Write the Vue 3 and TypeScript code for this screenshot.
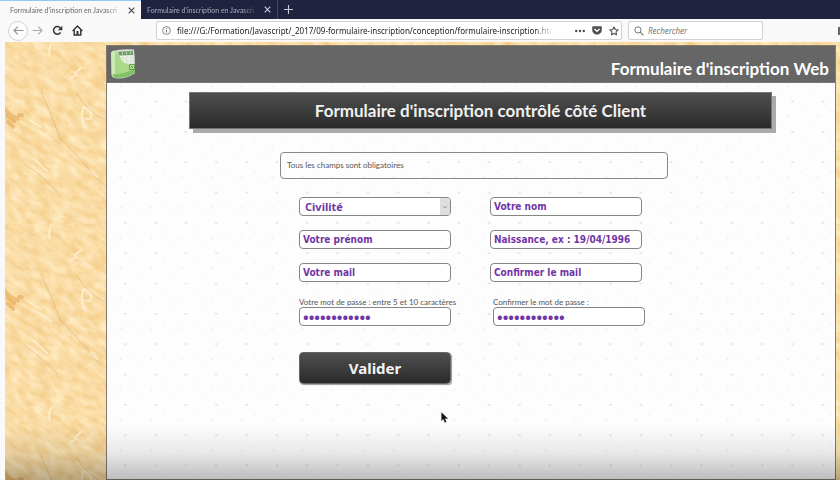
<script setup lang="ts">
import { ref } from 'vue'

const url = 'file:///G:/Formation/Javascript/_2017/09-formulaire-inscription/conception/formulaire-inscription.htm'
const tabs = [
  { title: "Formulaire d'inscription en Javascri", active: true },
  { title: "Formulaire d'inscription en Javascri", active: false },
]
const fields = [
  { id: 'nom', text: 'Votre nom' },
  { id: 'prenom', text: 'Votre prénom' },
  { id: 'naissance', text: 'Naissance, ex : 19/04/1996' },
  { id: 'mail', text: 'Votre mail' },
  { id: 'mail2', text: 'Confirmer le mail' },
]
const values = ref<Record<string, string>>({})
const password = ref('motdepasse12')
const confirmation = ref('motdepasse12')
const search = ref('')
</script>

<template>
  <div class="browser">
    <nav class="tabs">
      <div v-for="(tab, i) in tabs" :key="i" class="tab" :class="{ active: tab.active }">
        <span class="tab-title">{{ tab.title }}</span>
        <button class="icon-btn" aria-label="Fermer">
          <svg width="7" height="7" viewBox="0 0 7 7"><path d="M.7.7l5.6 5.6M6.3.7L.7 6.3" fill="none" stroke="currentColor" stroke-width="1.1" /></svg>
        </button>
      </div>
      <button class="icon-btn plus" aria-label="Nouvel onglet">
        <svg width="9" height="9" viewBox="0 0 9 9"><path d="M4.5 0v9M0 4.5h9" fill="none" stroke="currentColor" stroke-width="1.1" /></svg>
      </button>
    </nav>

    <div class="toolbar">
      <div class="nav-buttons">
        <button class="icon-btn back" aria-label="Précédent">
          <svg width="11" height="9" viewBox="0 0 11 9"><path d="M10.5 4.5H1M4.8.7L1 4.5l3.8 3.8" fill="none" stroke="#929292" stroke-width="1.1" /></svg>
        </button>
        <button class="icon-btn forward" aria-label="Suivant">
          <svg width="11" height="9" viewBox="0 0 11 9"><path d="M.5 4.5H10M6.2.7L10 4.5 6.2 8.3" fill="none" stroke="#aaa" stroke-width="1.1" /></svg>
        </button>
        <button class="icon-btn" aria-label="Actualiser">
          <svg width="11" height="11" viewBox="0 0 11 11"><path d="M8.6 7.4A3.8 3.8 0 1 1 8.3 3" fill="none" stroke="#333" stroke-width="1.5" /><path d="M10.3.7v4.5H5.8z" fill="#333" /></svg>
        </button>
        <button class="icon-btn" aria-label="Accueil">
          <svg width="11" height="11" viewBox="0 0 11 11"><path d="M.7 5.9L5.5 1l4.8 4.9M2.2 5v5h6.6V5" fill="none" stroke="#333" stroke-width="1.4" /><path d="M4.5 6h2v4h-2z" fill="#333" /></svg>
        </button>
      </div>
      <div class="url-bar">
        <svg width="9" height="9" viewBox="0 0 9 9"><circle cx="4.5" cy="4.5" r="3.9" fill="none" stroke="#777" stroke-width=".9" /><path d="M4.5 4v2.6M4.5 2.2v1" stroke="#777" stroke-width="1" /></svg>
        <span class="url">{{ url }}</span>
        <svg width="10" height="4" viewBox="0 0 10 4"><g fill="#4a4a4a"><circle cx="1.2" cy="2" r="1.2" /><circle cx="5" cy="2" r="1.2" /><circle cx="8.8" cy="2" r="1.2" /></g></svg>
        <svg width="10" height="9" viewBox="0 0 10 9"><path d="M1 .3h8q.8 0 .8.8v2.8a4.8 4.8 0 0 1-9.6 0V1.1q0-.8.8-.8z" fill="#505050" /><path d="M2.8 3.3L5 5.4l2.2-2.1" fill="none" stroke="#fff" stroke-width="1.3" stroke-linecap="round" /></svg>
        <svg width="10" height="10" viewBox="0 0 10 10"><path d="M5 .9l1.250 2.650 2.850.35L7 5.900l.55 2.900L5 7.400 2.450 8.800 3 5.900.9 3.900l2.850-.35z" fill="none" stroke="#505050" stroke-width="1.1" stroke-linejoin="round" /></svg>
      </div>
      <label class="search">
        <svg width="10" height="10" viewBox="0 0 10 10"><circle cx="3.9" cy="3.9" r="3.1" fill="none" stroke="#777" stroke-width="1" /><path d="M6.2 6.2l3.2 3.2" stroke="#777" stroke-width="1.2" /></svg>
        <input v-model="search" type="text" placeholder="Rechercher" aria-label="Rechercher" />
      </label>
      <span class="library"></span>
    </div>

    <main class="viewport">
      <svg class="backdrop" width="100%" height="100%" aria-hidden="true">
        <defs>
          <filter id="grain" x="0" y="0" width="100%" height="100%" color-interpolation-filters="sRGB">
            <feTurbulence type="fractalNoise" baseFrequency=".07 .15" numOctaves="5" seed="8" />
            <feColorMatrix values=".06 0 0 0 .95  .18 0 0 0 .775  .34 0 0 0 .48  0 0 0 0 1" />
          </filter>
          <filter id="soft"><feGaussianBlur stdDeviation=".6" /></filter>
          <pattern id="sand" width="182" height="182" patternUnits="userSpaceOnUse">
            <rect x="-80" y="-80" width="342" height="342" filter="url(#grain)" transform="rotate(35 91 91)" />
            <g filter="url(#soft)" fill="none" stroke-linecap="round">
              <path d="M46 2q-3 6-1 12M70 31l6-5M66 36l5-3M78 66q-3 9 2 20M78 66q7-2 8 6t-6 4M34 89l12 8M24 78l12 7M28 116l14 13M86 130l6 5" stroke="#fff3d8" stroke-width="2" opacity=".75" />
              <path d="M36 50q10 20 19 46 18 18 38 42M72 52q10 18 30 27M20 122q18 12 32 28" stroke="#b98b58" stroke-width=".8" opacity=".4" />
              <path d="M0 67l4 5 9 5M3 80l5 5M3 73l6 6M14 73h3" stroke="#d98c2c" stroke-width="4" opacity=".4" />
            </g>
          </pattern>
        </defs>
        <rect width="100%" height="100%" fill="url(#sand)" />
      </svg>

      <section class="page">
        <header class="site-header">
          <svg class="logo" width="26" height="30" viewBox="0 0 26 30" aria-hidden="true">
            <path d="M2 2Q12-.5 24 .5q1.500 12 .5 24Q16 30 7 29.500 2 29 1.500 26z" fill="#d5dfcf" />
            <path d="M8 3l15-.5v15L9 16z" fill="#edf3e8" />
            <path d="M8 2.800l15-.8v4L9 6.500z" fill="#6f9d68" />
            <path d="M12 4.500h1M16 4.300h1M20 4.100h1" stroke="#e6f0df" stroke-width="1.5" />
            <path d="M10 9h13M10 12h13M10 15h13M13 7v9M17 7v10M21 7v10" stroke="#c9dcbf" stroke-width=".6" />
            <path d="M1 3q7-2 9 5 2 8 15 8v8q-8 5-19 5-4-1-4.500-4z" fill="#abd98a" />
            <path d="M1 3q3-1 4 0v22l-3 1z" fill="#cdebb4" />
            <path d="M3 25q11 1 22-6v5q-8 5-19 5-3-1-3-4z" fill="#80c168" />
            <path d="M19.500 15.500h5v5h-5z" fill="#b6db9a" stroke="#5b9850" stroke-width=".9" />
            <path d="M21 17l2 2" stroke="#427b3a" stroke-width="1" />
          </svg>
          <h1>Formulaire d'inscription Web</h1>
        </header>

        <div class="content">
          <svg class="backdrop" width="100%" height="100%" aria-hidden="true">
            <defs>
              <pattern id="specks" x="3" y="4" width="30.33" height="30.33" patternUnits="userSpaceOnUse">
                <path d="M14 14.500h2.500" stroke="#dcd9da" stroke-width="1.3" />
                <path d="M10 29.500h1.800" stroke="#e9e6e7" stroke-width="1.2" />
                <path d="M22.500 24h2M2 5h1.500" stroke="#f3eff0" stroke-width="1.2" />
              </pattern>
            </defs>
            <rect width="100%" height="100%" fill="url(#specks)" />
          </svg>
          <h2>Formulaire d'inscription contrôlé côté Client</h2>
          <div class="panel">
            <p class="notice">Tous les champs sont obligatoires</p>
            <form @submit.prevent>
              <div class="select-box">
                <select aria-label="Civilité">
                  <option>Civilité</option>
                </select>
                <span class="chevron"><svg width="6" height="4" viewBox="0 0 6 4"><path d="M1 1l2 2 2-2" fill="none" stroke="#8c8c8c" stroke-width=".8" /></svg></span>
              </div>
              <input v-for="f in fields" :id="f.id" :key="f.id" v-model="values[f.id]" class="field" type="text" :placeholder="f.text" :aria-label="f.text" />
              <div class="secret">
                <label for="mdp">Votre mot de passe : entre 5 et 10 caractères</label>
                <input id="mdp" v-model="password" class="field" type="password" />
              </div>
              <div class="secret second">
                <label for="mdp2">Confirmer le mot de passe :</label>
                <input id="mdp2" v-model="confirmation" class="field" type="password" />
              </div>
              <button class="submit" type="submit">Valider</button>
            </form>
          </div>
        </div>
      </section>
      <div class="shade"></div>
      <svg class="cursor" width="8" height="11" viewBox="0 0 8 11" aria-hidden="true"><path d="M.5.5v8.200l1.900-1.800 1.400 3.500 1.500-.7-1.400-3.200h2.900z" fill="#111" stroke="#555" stroke-width=".4" /></svg>
    </main>
  </div>
</template>

<style>
body {
  background: #f9f9fa;
}
</style>

<style scoped>
.browser {
  display: flex;
  flex-direction: column;
  min-height: 100vh;
  font-family: "Noto Sans", "Open Sans", sans-serif;
  color: #333;
}
.browser * {
  box-sizing: border-box;
}
svg {
  display: block;
  flex: none;
}
.icon-btn {
  display: flex;
  align-items: center;
  justify-content: center;
  padding: 0;
  border: 0;
  background: none;
  color: inherit;
}
.tabs {
  display: flex;
  height: 19px;
  background: #202340;
  color: #c9cad4;
}
.tab {
  display: flex;
  align-items: center;
  gap: 4px;
  width: 137px;
  padding: 0 6px;
  border-right: 1px solid #45475f;
}
.tab.active {
  width: 141px;
  padding-left: 10px;
  border-top: 1px solid #8fccf5;
  border-right: 0;
  background: #f9f9fa;
  color: #444;
}
.tab-title {
  flex: 1;
  font-family: Lato, sans-serif;
  font-size: 7px;
  line-height: 12px;
  white-space: nowrap;
  opacity: 0.8;
  mask-image: linear-gradient(90deg, #000 85%, transparent);
}
.plus {
  width: 20px;
}
.toolbar {
  display: flex;
  align-items: center;
  height: 23px;
  padding-left: 8px;
  background: #f9f9fa;
}
.nav-buttons {
  display: flex;
  align-items: center;
  gap: 9px;
  width: 148px;
}
.back {
  width: 20px;
  height: 20px;
  border: 1px solid #d3d3d5;
  border-radius: 50%;
  background: #fcfcfc;
}
.forward {
  margin-left: -5px;
}
.url-bar,
.search {
  display: flex;
  align-items: center;
  height: 19px;
  border: 1px solid #d2d2d4;
  border-radius: 2px;
  background: #fff;
}
.url-bar {
  flex: 1;
  gap: 7px;
  min-width: 0;
  padding: 0 2px 0 5px;
}
.url {
  flex: 1;
  overflow: hidden;
  margin: 0 15px 0 -1px;
  font-size: 8px;
  line-height: 14px;
  white-space: nowrap;
  color: #222;
  mask-image: linear-gradient(90deg, #000 95%, transparent);
}
.search {
  gap: 4px;
  width: 135px;
  margin: 0 75px 0 6px;
  padding: 0 5px;
}
.search input {
  flex: 1;
  min-width: 0;
  padding: 0;
  border: 0;
  outline: 0;
  background: none;
  font: italic 8px "Noto Sans", sans-serif;
}
.search input::placeholder {
  color: #777;
  opacity: 1;
}
.library {
  width: 2px;
  height: 8px;
  background: #666;
}
.viewport {
  position: relative;
  display: flex;
  flex: 1;
  margin-left: 5px;
  padding: 3px 4px 0 101px;
  background: #fbdfa9;
}
.backdrop {
  position: absolute;
  inset: 0;
}
.page {
  position: relative;
  display: flex;
  flex: 1;
  flex-direction: column;
  border: 1px solid #85796a;
  background: #fefdfe;
}
.site-header {
  display: flex;
  align-items: center;
  justify-content: space-between;
  height: 37px;
  padding: 0 6px 0 3px;
  border-bottom: 1px solid #777;
  background: #666;
}
h1,
h2 {
  margin: 0;
  font-family: Lato, sans-serif;
  font-size: 17px;
  font-weight: 700;
}
h1 {
  padding-top: 10px;
  line-height: 24px;
  color: #fff;
}
.content {
  position: relative;
  flex: 1;
  padding: 9px 0 0 6px;
}
h2 {
  position: relative;
  margin: 0 63px 23px 76px;
  border: 1px solid #777;
  background: linear-gradient(#505050, #2a2a2a);
  box-shadow: 4px 4px 0 #aaa;
  line-height: 35px;
  text-align: center;
  color: #f0f0f0;
}
.panel {
  position: relative;
  width: 388px;
  margin: 0 auto;
}
.notice {
  margin: 0 0 18px;
  padding: 0 6px;
  border: 1px solid #888;
  border-radius: 4px;
  font-family: Lato, sans-serif;
  font-size: 8px;
  line-height: 25px;
  color: #555;
}
form {
  display: grid;
  grid-template-columns: 152px 152px;
  gap: 14px 39px;
  padding-left: 19px;
}
.field,
select {
  display: block;
  width: 152px;
  height: 19px;
  padding: 0 3px;
  border: 1px solid #858585;
  border-radius: 4px;
  outline: 0;
  background: #fff;
  font: 700 10px "DejaVu Sans Condensed", "Noto Sans", sans-serif;
  color: #7136a5;
}
.field::placeholder {
  color: #7136a5;
  opacity: 1;
}
.select-box {
  position: relative;
}
select {
  appearance: none;
  padding: 0 12px 1px 5px;
  font: 700 11px "Noto Sans", sans-serif;
}
.chevron {
  position: absolute;
  top: 1px;
  right: 1px;
  bottom: 1px;
  display: flex;
  align-items: center;
  justify-content: center;
  width: 10px;
  border-radius: 0 3px 3px 0;
  background: #dedede;
  pointer-events: none;
}
.secret {
  padding-top: 1px;
}
.secret label {
  display: block;
  font-family: Lato, sans-serif;
  font-size: 8px;
  line-height: 10px;
  white-space: nowrap;
  color: #555;
}
.secret .field {
  font: 700 15px "Noto Sans", sans-serif;
}
.second {
  padding-left: 3px;
}
.submit {
  height: 32px;
  margin-top: 12px;
  border: 1px solid #666;
  border-radius: 4px;
  background: linear-gradient(#505050, #2a2a2a);
  box-shadow: 1px 1px 1px #999;
  font: 700 15px "Noto Sans", sans-serif;
  color: #f3f3f3;
}
.shade {
  position: absolute;
  right: 0;
  bottom: 0;
  left: 0;
  height: 56px;
  background: linear-gradient(transparent, rgba(0, 0, 0, 0.08) 50%, rgba(0, 0, 0, 0.26));
  pointer-events: none;
}
.cursor {
  position: absolute;
  top: 370px;
  left: 436px;
}
</style>
